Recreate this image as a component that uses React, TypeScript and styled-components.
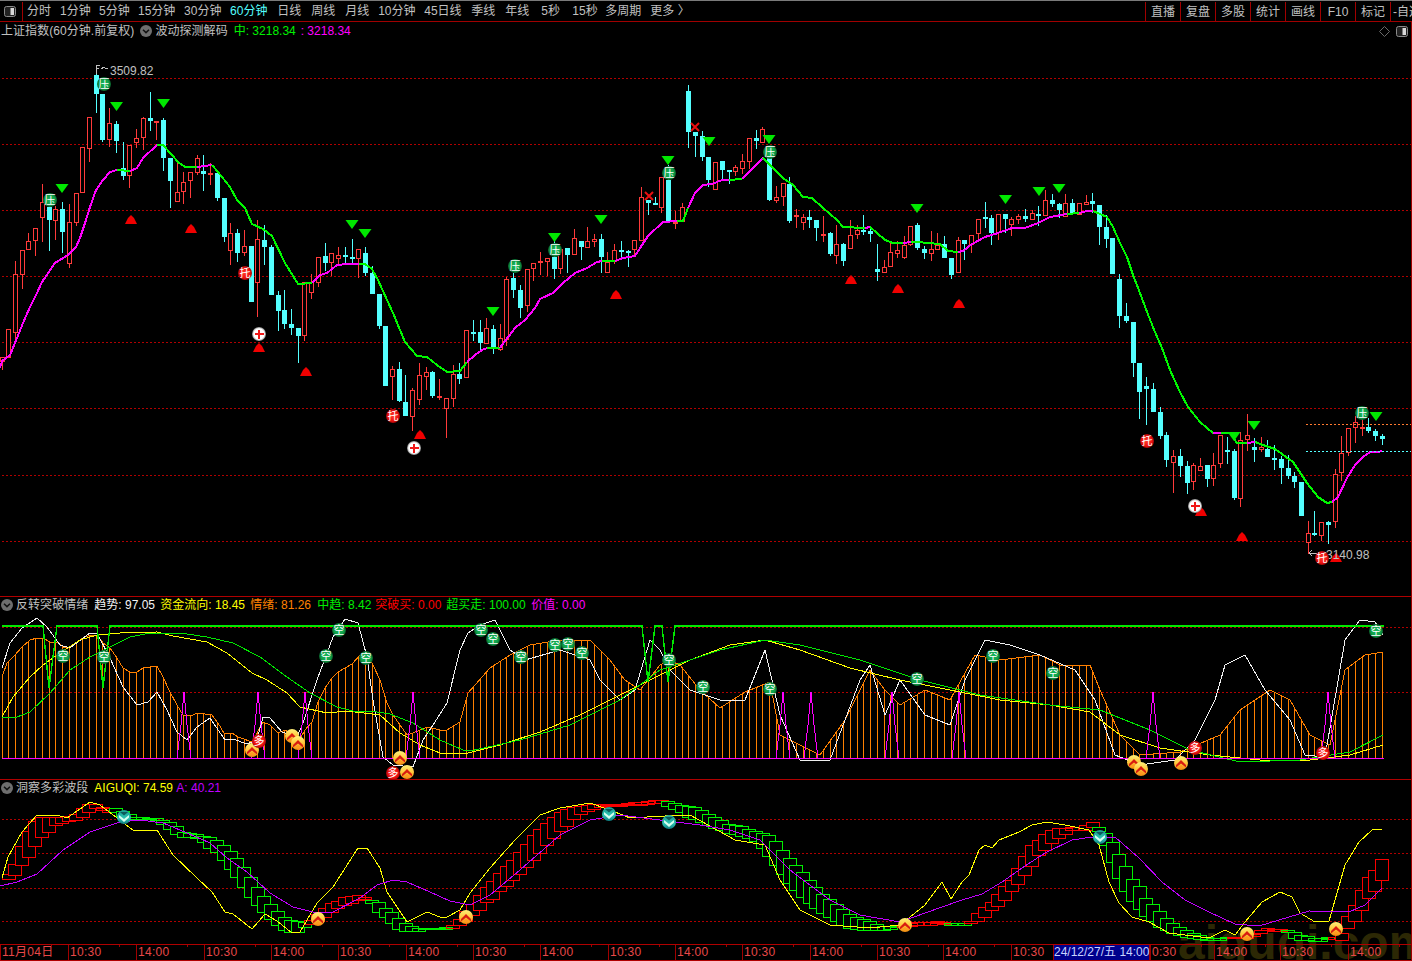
import React from 'react';
import styled, { createGlobalStyle } from 'styled-components';

const GlobalStyle = createGlobalStyle`
  html, body { margin: 0; padding: 0; background: #000; }
  #root { width: 1412px; height: 961px; overflow: hidden; }
`;

const FONT = `"Liberation Sans", "Noto Sans CJK SC", sans-serif`;

const Screen = styled.div`
  position: relative;
  width: 1412px;
  height: 961px;
  background: #000;
  display: flex;
  flex-direction: column;
  overflow: hidden;
  font: 12px/16px ${FONT};
  color: #c0c0c0;
`;
const TopBar = styled.div`
  position: relative;
  z-index: 1;
  height: 20px;
  flex: none;
  display: flex;
  align-items: stretch;
  border-top: 1px solid #7a7a7a;
  border-bottom: 1px solid #a00000;
  box-sizing: content-box;
`;
const MenuButton = styled.div`
  width: 23px;
  flex: none;
  display: flex;
  align-items: center;
  justify-content: center;
  border-right: 1px solid #a00000;
  box-sizing: border-box;
  margin-top: 1px;
  padding-right: 3px;
`;
const Tabs = styled.div`
  display: flex;
  align-items: center;
  padding-left: 4px;
  flex: 1;
`;
const Tab = styled.span<{ $active?: boolean; $gap: number }>`
  white-space: nowrap;
  margin-right: ${p => p.$gap}px;
  color: ${p => (p.$active ? '#54ffff' : '#c0c0c0')};
`;
const ToolCell = styled.div<{ $w?: number }>`
  width: ${p => p.$w ?? 35}px;
  flex: none;
  box-sizing: border-box;
  border-left: 1px solid #a00000;
  display: flex;
  align-items: center;
  justify-content: center;
  white-space: nowrap;
  overflow: hidden;
  margin-top: 1px;
`;
const LastCell = styled(ToolCell)`
  justify-content: flex-start;
  padding-left: 2px;
`;

const Pane = styled.section<{ $h: number }>`
  position: relative;
  z-index: 1;
  height: ${p => p.$h}px;
  flex: none;
  display: flex;
  flex-direction: column;
  box-sizing: border-box;
  border-right: 1px solid #a00000;
  border-bottom: 1px solid #b00000;
`;
const PaneHeader = styled.div<{ $h: number }>`
  height: ${p => p.$h}px;
  flex: none;
  display: flex;
  align-items: center;
  padding-left: 1px;
  white-space: nowrap;
`;
const Title = styled.span<{ $mr?: number }>`
  color: #c0c0c0;
  margin-right: ${p => p.$mr ?? 0}px;
  letter-spacing: 0.05px;
`;
const Value = styled.span<{ $c: string; $x: number }>`
  color: ${p => p.$c};
  position: absolute;
  left: ${p => p.$x}px;
`;
const HeaderValues = styled.div`
  position: relative;
  flex: 1;
  height: 16px;
`;
const Caret = styled.svg`
  width: 12px;
  height: 12px;
  flex: none;
  margin: 0 3px 0 0;
`;
const CornerIcons = styled.div`
  display: flex;
  align-items: center;
  gap: 6px;
  padding-right: 3px;
`;
const ChartSvg = styled.svg`
  display: block;
  flex: 1;
  width: 1411px;
  min-height: 0;
`;
const Axis = styled.footer`
  position: relative;
  z-index: 1;
  height: 16px;
  flex: none;
  display: flex;
  border-bottom: 1px solid #b00000;
  border-right: 1px solid #a00000;
  box-sizing: border-box;
  color: #e84848;
`;
const AxisCell = styled.div<{ $w: number }>`
  position: relative;
  width: ${p => p.$w}px;
  flex: none;
  box-sizing: border-box;
  border-left: 1px solid #a00000;
  padding-left: 1px;
  line-height: 15px;
  letter-spacing: 0.3px;
  white-space: nowrap;
  overflow: hidden;
  &::after {
    content: '';
    position: absolute;
    left: 50px;
    top: 0;
    width: 1px;
    height: 2px;
    background: #a00000;
  }
`;
const AxisCursor = styled.div<{ $w: number }>`
  width: ${p => p.$w}px;
  flex: none;
  box-sizing: border-box;
  background: #00008c;
  color: #c8d4ff;
  line-height: 15px;
  text-align: center;
  white-space: nowrap;
  border-left: 1px solid #a00000;
  border-right: 1px solid #a00000;
`;
const Watermark = styled.div`
  position: absolute;
  left: 1178px;
  top: 913px;
  font: bold 48px/60px "Liberation Sans", sans-serif;
  color: #2c2805;
  white-space: nowrap;
  z-index: 0;
`;
const PriceTag = styled.text`
  font: 12px ${FONT};
  fill: #c0c0c0;
`;
const BadgeText = styled.text`
  font: 11px "Noto Sans CJK SC", sans-serif;
  fill: #fff;
  text-anchor: middle;
`;
const Grid = styled.line`
  stroke: #b00000;
  stroke-width: 1;
  stroke-dasharray: 2 2;
  shape-rendering: crispEdges;
`;
const Line = styled.polyline<{ $c: string; $w?: number }>`
  fill: none;
  stroke: ${p => p.$c};
  stroke-width: ${p => p.$w ?? 1};
  shape-rendering: crispEdges;
`;
const Tri = styled.polygon<{ $c: string }>`
  fill: ${p => p.$c};
`;

type C = [number, number, number, number, number];
const CANDLES: C[] = [
[357,362,357,370,1],[329,358,329,358,1],[274,333,261,340,1],[250,275,250,289,1],[241,250,233,250,1],[228,241,228,256,1],[202,218,184,242,1],[207,220,207,251,0],[209,221,206,240,1],[209,232,202,253,0],
[222,264,204,268,1],[193,223,193,226,1],[147,193,147,193,1],[117,149,117,162,1],[75,94,65,113,0],[94,140,94,142,0],[123,140,108,147,1],[124,141,121,153,0],[168,176,142,180,0],[145,176,145,188,1],
[138,143,129,148,1],[118,138,117,150,1],[118,121,92,131,0],[121,123,121,140,1],[120,158,118,171,0],[158,181,158,208,0],[192,202,160,202,1],[182,192,172,204,1],[172,181,172,198,1],[158,173,155,175,1],
[171,174,155,191,0],[173,175,163,185,1],[173,198,173,201,0],[198,237,198,242,0],[233,251,223,265,1],[233,253,229,262,0],[246,253,230,256,1],[246,302,246,302,0],[239,283,220,317,1],[240,247,225,265,0],
[247,295,245,295,0],[295,311,291,331,0],[310,324,290,329,0],[324,328,309,335,0],[328,336,328,363,0],[282,336,282,341,1],[282,293,274,299,1],[257,283,257,287,1],[256,263,243,271,0],[253,263,253,276,1],
[255,259,247,264,1],[255,257,247,265,0],[257,258,239,263,0],[249,259,249,278,1],[253,273,247,276,0],[273,294,266,294,0],[294,326,294,329,0],[326,386,326,386,0],[369,377,366,400,1],[369,401,362,402,0],
[402,416,375,416,0],[390,417,388,431,1],[375,400,363,405,1],[372,377,367,390,1],[372,396,371,398,0],[396,397,379,400,1],[398,409,398,438,1],[374,399,365,407,1],[374,379,363,384,0],[330,378,330,378,1],
[332,333,320,341,0],[332,343,320,350,0],[328,344,318,344,1],[329,348,325,354,0],[338,350,324,351,1],[279,340,277,346,1],[278,290,273,298,0],[290,308,285,318,0],[269,306,269,312,1],[263,269,263,281,1],
[261,263,252,275,1],[258,262,258,276,1],[257,269,240,279,0],[249,269,249,274,1],[248,255,248,273,0],[238,255,229,255,1],[241,247,241,260,0],[241,248,227,248,1],[239,242,234,247,1],[239,257,234,273,0],
[262,273,252,273,1],[250,262,244,264,1],[250,251,241,257,0],[251,252,250,267,0],[240,250,240,257,1],[197,241,187,241,1],[200,203,200,215,0],[203,205,197,205,0],[177,208,177,213,1],[180,222,165,222,0],
[222,223,211,229,1],[207,222,203,222,1],[91,132,85,148,0],[132,136,132,157,0],[136,157,131,161,0],[157,180,157,187,0],[162,190,162,190,1],[161,170,161,180,0],[170,171,170,184,0],[167,172,165,176,1],
[161,169,154,174,1],[138,162,138,169,1],[138,141,130,149,0],[129,143,127,143,1],[153,200,153,201,0],[197,201,186,203,1],[183,197,183,206,1],[184,221,177,223,0],[215,216,209,228,1],[217,223,214,230,1],
[217,220,210,228,0],[220,228,220,241,0],[234,235,216,242,1],[233,254,232,256,0],[244,256,225,264,1],[244,261,243,266,0],[235,249,220,249,1],[230,235,225,239,1],[230,231,215,235,0],[231,234,227,242,0],
[269,272,244,281,0],[267,273,260,273,1],[252,267,243,267,1],[250,254,241,258,1],[245,258,236,259,1],[226,245,226,246,1],[225,248,223,250,0],[249,253,246,259,0],[249,254,231,261,1],[245,250,233,250,1],
[244,258,236,258,0],[258,275,258,279,0],[240,273,237,273,1],[240,244,240,260,0],[235,245,235,253,1],[219,234,219,242,1],[217,218,202,228,0],[218,233,215,245,0],[214,233,214,240,1],[214,219,214,233,0],
[219,225,217,236,1],[216,220,214,224,1],[216,219,209,222,0],[213,220,210,220,1],[214,215,206,226,0],[200,216,190,216,1],[200,204,194,207,0],[204,210,203,218,0],[203,217,194,217,1],[203,213,199,213,0],
[203,215,203,215,1],[202,205,195,205,1],[201,204,193,213,0],[205,227,205,245,0],[227,239,215,248,0],[238,274,238,274,0],[279,316,274,328,0],[316,321,303,323,0],[322,363,322,377,0],[363,392,363,419,0],
[386,389,377,425,0],[389,412,383,412,0],[412,436,407,439,0],[435,460,432,467,0],[456,463,450,493,1],[456,466,449,477,0],[466,483,461,494,0],[465,482,463,490,1],[466,471,458,471,1],[465,479,465,487,0],
[465,479,453,486,1],[435,464,435,468,1],[450,451,437,464,0],[451,498,449,500,0],[440,499,432,507,1],[435,440,414,451,1],[447,450,438,462,0],[447,450,437,452,1],[449,457,440,457,0],[458,459,445,470,0],
[459,468,456,484,0],[468,476,455,479,0],[476,482,472,488,0],[482,516,482,516,0],[533,543,521,554,1],[533,535,511,536,0],[522,536,522,541,1],[522,525,521,544,0],[474,522,469,528,1],[453,473,436,481,1],
[428,453,428,456,1],[422,428,416,443,1],[427,429,418,436,1],[427,431,418,433,0],[431,436,429,441,0],[436,439,434,445,0],
];

const xAt = (i: number) => Math.floor(2 + 6.733 * i) + 0.5;

const MA: [string, string][] = [
['p','0,368 2,361 10,355 17,338 23,323 30,307 37,293 42,282 55,263 68,255 76,247 80,238 86,220 90,207 96,190 103,180 110,172 117,170'],
['g','117,170 130,171'],
['p','130,171 137,168 143,158 157,145'],
['g','157,145 163,145 172,155 178,162 185,167 197,167'],
['p','197,167 212,165'],
['g','212,165 218,172 230,187 237,200 245,208 252,224 263,229 272,236 285,263 298,284 312,283'],
['p','312,283 320,275 327,273 337,265 347,264 359,264'],
['g','359,264 365,264 372,269 378,280 393,313 405,342 417,356 427,357 437,365 447,372 460,371 467,362'],
['p','467,362 475,355 482,350 487,348'],
['g','487,348 500,348'],
['p','500,348 502,345 515,328 525,320 535,308 540,299 553,293 563,283 575,273 587,268 597,262 602,261'],
['g','602,261 615,261'],
['p','615,261 623,258 635,256 642,245 648,236 663,222 677,221'],
['g','677,221 683,221 688,208'],
['p','688,208 695,193 703,185 712,184 722,180 729,180'],
['g','729,180 742,179'],
['p','742,179 752,169 763,158'],
['g','763,158 773,168 783,178 793,185 803,197 812,198 823,208 837,220 843,227 865,228'],
['p','865,228 870,227'],
['g','870,227 877,233 885,240 893,243 903,243'],
['p','903,243 911,242'],
['g','911,242 918,242 927,243 940,244 948,251 958,252'],
['p','958,252 963,251 972,244 985,237 995,234 1012,228 1025,228 1038,223 1050,217 1067,214'],
['g','1067,214 1079,213'],
['p','1079,213 1087,211 1093,211'],
['g','1093,211 1107,217 1113,227 1120,243 1127,257 1133,275 1140,293 1147,312 1155,332 1162,348 1170,370 1180,392 1188,407 1200,422 1213,433'],
['p','1213,433 1221,433'],
['g','1221,433 1230,433 1237,443 1247,443'],
['p','1247,443 1255,442'],
['g','1255,442 1263,445 1275,449 1293,462 1307,483 1318,497 1327,503 1332,502'],
['p','1332,502 1338,497 1347,478 1355,465 1363,457 1370,452 1378,452 1382,451'],
];

const parse = (s: string) => s.trim().split(/\s+/).map(p => p.split(',').map(Number));
const interp = (pts: number[][], x: number) => {
  if (x <= pts[0][0]) return pts[0].slice(1);
  for (let k = 1; k < pts.length; k++) {
    if (x <= pts[k][0]) {
      const [x0, ...a] = pts[k - 1];
      const [x1, ...b] = pts[k];
      const t = (x - x0) / (x1 - x0);
      return a.map((v, j) => v + (b[j] - v) * t);
    }
  }
  return pts[pts.length - 1].slice(1);
};

const ORANGE = '2,677 7,663 15,655 22,647 30,640 37,638 43,638 50,642 57,642 63,647 70,647 77,642 83,638 90,635 97,635 103,643 110,648 117,658 123,668 130,672 137,672 143,668 157,666 163,677 170,692 177,705 183,715 190,716 198,713 212,715 218,723 224,733 232,733 238,737 252,742 257,733 263,722 270,725 278,733 285,730 292,735 298,742 305,730 312,722 318,702 325,688 332,678 338,672 352,664 360,655 367,655 373,665 380,680 387,703 393,715 400,725 407,735 413,733 427,727 440,730 447,730 460,722 468,693 475,685 490,668 510,655 530,645 560,640 590,640 600,650 610,660 625,680 640,690 660,665 670,660 680,665 700,690 720,708 745,692 770,682 780,735 800,745 820,755 845,720 870,670 885,690 900,705 925,690 950,700 975,655 1000,660 1040,655 1060,665 1090,665 1100,690 1120,735 1140,755 1180,752 1220,735 1240,710 1270,690 1290,700 1310,735 1330,745 1345,670 1365,655 1383,652';
const WHITE = '2,668 10,643 22,628 37,618 47,627 60,645 70,648 90,633 97,633 110,658 123,687 137,705 148,702 157,692 167,710 177,732 187,740 197,727 210,718 225,740 233,739 247,744 257,740 263,717 270,718 282,732 297,737 303,723 317,680 333,637 345,619 358,623 367,657 373,700 383,757 393,765 413,767 423,740 433,725 447,703 460,650 468,633 480,625 495,620 510,650 525,660 560,650 590,660 600,680 620,700 635,690 650,640 660,650 670,670 690,690 720,700 745,700 765,650 780,715 800,760 830,760 860,680 870,665 885,715 900,680 925,715 950,725 965,680 985,640 1010,645 1040,655 1075,670 1095,700 1115,755 1140,765 1175,760 1195,740 1215,700 1225,665 1245,655 1265,690 1290,720 1305,755 1325,757 1345,640 1360,620 1375,622 1383,635';
const YELLOW2 = '2,717 13,697 30,677 43,665 60,653 80,640 97,635 120,633 157,632 173,636 207,642 227,653 252,673 267,680 287,693 300,707 327,713 347,711 380,715 400,733 420,745 440,753 468,753 500,745 540,732 580,715 620,695 650,680 690,660 730,645 765,640 800,650 850,668 900,680 950,690 1000,700 1050,705 1090,712 1120,735 1160,748 1210,755 1260,760 1310,760 1350,755 1383,745';
const GREEN2 = '2,717 17,717 30,712 50,693 70,670 90,657 110,647 130,637 150,633 180,633 207,637 233,643 260,657 287,677 310,693 337,707 353,711 377,712 390,714 413,723 440,740 463,750 470,751 520,740 570,725 620,700 660,670 720,650 765,640 800,645 860,660 920,680 980,695 1050,705 1100,710 1150,730 1190,750 1240,762 1300,760 1350,752 1383,735';
const OVERBOUGHT = '2,626 43,626 49,688 57,626 97,626 103,688 110,626 642,626 648,682 655,626 662,626 668,682 675,626 1384,626';
const SPIKES = [184, 258, 305, 413, 783, 811, 892, 959, 1153, 1328];

const YELLOW3 = '2,878 8,857 22,832 37,815 57,815 67,818 90,802 100,805 117,818 133,830 157,830 173,855 197,878 212,892 225,912 233,914 252,929 265,914 277,921 292,933 300,932 317,903 333,887 358,848 367,848 380,868 387,892 407,922 427,912 440,917 447,917 460,910 470,893 490,868 515,840 540,815 560,808 590,803 610,810 630,818 665,816 690,815 710,826 735,840 765,845 780,880 800,910 830,925 870,928 900,925 925,905 942,882 951,899 962,882 969,875 979,850 985,845 992,848 999,840 1019,832 1032,825 1047,822 1065,825 1089,830 1099,845 1109,882 1119,903 1132,917 1149,922 1169,933 1209,938 1225,930 1235,935 1245,922 1262,902 1280,892 1292,897 1300,913 1315,922 1329,921 1345,865 1359,842 1372,830 1382,829';
const PURPLE3 = '0,886 17,882 37,874 63,850 90,832 120,822 140,820 163,823 187,833 210,843 227,858 247,872 270,893 293,907 313,912 333,912 360,898 377,885 393,880 407,882 430,892 450,901 470,905 490,895 520,870 560,835 590,820 620,815 660,820 700,825 730,830 760,840 790,870 830,900 860,915 900,922 942,907 962,900 982,894 1002,882 1022,868 1045,853 1072,840 1092,837 1115,837 1139,858 1162,882 1185,900 1209,912 1235,924 1259,926 1289,917 1309,911 1349,912 1365,905 1382,888';

const BOXES = '0,880,883 2,875,880 9,863,874 16,845,865 23,830,856 29,820,845 36,817,837 42,817,832 49,817,825 56,817,823 63,816,821 70,814,820 76,808,817 83,804,812 90,804,808 97,807,810 108,808,812 115,810,815 123,814,819 130,817,819 137,817,819 144,818,819 151,818,820 158,820,825 165,823,830 172,827,835 178,832,837 186,833,837 192,834,838 199,836,842 206,837,850 213,841,853 220,847,863 227,853,872 234,862,880 241,872,893 248,881,900 256,894,910 262,901,917 269,908,922 276,915,928 283,920,932 290,920,932 297,923,928 304,920,924 310,915,921 318,908,917 326,903,912 333,900,907 339,897,905 346,896,903 353,895,900 360,898,899 367,900,904 374,902,913 381,909,918 388,914,926 395,920,931 402,925,931 409,927,931 416,928,929 423,928,929 430,928,929 437,928,930 445,926,928 452,921,926 459,911,921 466,905,916 473,895,910 480,888,903 487,880,898 494,872,890 501,865,885 508,858,878 515,850,872 522,842,865 529,833,858 536,827,850 543,820,842 550,815,835 557,810,828 564,807,822 571,806,815 578,805,812 590,804,808 600,805,806 620,803,805 640,801,804 655,800,803 665,802,808 675,805,812 685,806,818 695,810,822 705,815,826 715,820,830 725,825,834 735,826,836 745,830,838 755,832,845 765,836,860 775,848,872 785,860,885 795,870,895 805,882,905 815,893,912 825,900,918 835,908,925 845,915,928 855,918,930 865,922,930 875,926,930 885,926,929 895,925,927 905,923,926 915,922,925 935,921,923 945,923,925 958,923,925 965,921,923 972,912,920 979,907,917 985,903,911 992,893,905 999,885,899 1005,881,892 1012,867,883 1019,855,874 1025,845,866 1032,840,855 1039,833,849 1045,830,843 1052,828,838 1059,828,834 1066,827,830 1072,827,830 1079,825,830 1086,822,827 1092,827,830 1099,832,843 1106,841,861 1112,853,877 1119,865,890 1126,878,900 1134,887,910 1139,897,915 1146,904,921 1154,911,927 1160,918,930 1166,923,933 1173,927,935 1180,930,937 1187,933,938 1194,935,939 1201,937,940 1208,938,940 1222,937,938 1242,937,938 1255,930,933 1262,928,930 1282,930,932 1289,932,938 1295,935,940 1309,938,941 1329,937,939 1335,934,941 1341,917,929 1349,904,920 1355,891,911 1362,878,899 1369,869,890 1375,859,880';
const GREEN_RANGES = [[-1, 2], [105, 144], [150, 303], [362, 442], [660, 892], [943, 960], [1090, 1222], [1280, 1328]];

const DOWN = [[62,184],[116.5,102],[163.5,99],[352,220],[365,229],[493,307],[554.5,233],[601,215],[668,156],[709,137],[769,135],[917,204],[1005.5,195],[1039,187],[1059,184],[1234,432],[1254,421],[1376,412]];
const UP = [[131,215],[191,224],[259,343],[306,367],[420,430],[616,290],[851,275],[898,284],[959,299],[1201,507],[1242,532],[1336,553]];
const YA = [[50,200],[104,84],[555,250],[515,266],[669,173],[770,152],[1362,413]];
const TUO = [[245,273],[393,416],[1147,441],[1322,558]];
const PLUS = [[259,334],[414,448],[1195,506]];
const CROSS = [[649,196],[695,127]];

const KONG = [[63,656],[104,657],[339,630],[326,656],[366,658],[481,630],[493,639],[521,657],[555,645],[568,644],[582,653],[669,660],[703,687],[770,689],[917,679],[993,656],[1053,673],[1376,631]];
const UP2 = [[252,750],[292,736],[298,743],[400,758],[407,772],[1134,762],[1141,769],[1181,763]];
const DUO = [[259,741],[393,773],[1195,748],[1323,753]];
const TEAL3 = [[124,817],[609,814],[669,822],[1100,837]];
const UP3 = [[318,919],[466,917],[905,925],[1247,934],[1336,929]];

const Gradients = () => (
  <defs>
    <radialGradient id="bGreen"><stop offset="0%" stopColor="#16b95a" /><stop offset="70%" stopColor="#0fa048" /><stop offset="100%" stopColor="#0a5f2a" /></radialGradient>
    <radialGradient id="bRed"><stop offset="0%" stopColor="#ff3a2a" /><stop offset="70%" stopColor="#f01010" /><stop offset="100%" stopColor="#a00808" /></radialGradient>
    <radialGradient id="bWhite"><stop offset="0%" stopColor="#ffffff" /><stop offset="75%" stopColor="#ffffff" /><stop offset="100%" stopColor="#808080" /></radialGradient>
    <linearGradient id="bGold" x1="0" y1="0" x2="0" y2="1"><stop offset="0%" stopColor="#fff07a" /><stop offset="50%" stopColor="#ffc83c" /><stop offset="100%" stopColor="#f08a10" /></linearGradient>
    <linearGradient id="bTeal" x1="0" y1="0" x2="0" y2="1"><stop offset="0%" stopColor="#1a9a90" /><stop offset="60%" stopColor="#2cc4b4" /><stop offset="100%" stopColor="#0e7d82" /></linearGradient>
  </defs>
);

const Disc = ({ x, y, fill, ch }: { x: number; y: number; fill: string; ch: string }) => (
  <g>
    <circle cx={x} cy={y} r={7} fill={`url(#${fill})`} />
    <BadgeText x={x} y={y + 4}>{ch}</BadgeText>
  </g>
);
const PlusBadge = ({ x, y }: { x: number; y: number }) => (
  <g>
    <circle cx={x} cy={y} r={7} fill="url(#bWhite)" />
    <path d={`M${x - 4.5} ${y}h9M${x} ${y - 4.5}v9`} stroke="#f01818" strokeWidth={2} shapeRendering="crispEdges" />
  </g>
);
const CrossMark = ({ x, y }: { x: number; y: number }) => (
  <path d={`M${x - 4} ${y - 4}l8 8M${x + 4} ${y - 4}l-8 8`} stroke="#e81010" strokeWidth={2} fill="none" />
);
const UpChevron = ({ x, y }: { x: number; y: number }) => (
  <g>
    <circle cx={x} cy={y} r={7} fill="url(#bGold)" />
    <path d={`M${x - 5} ${y + 2}l5-5 5 5v2.5l-5-4-5 4z`} fill="#d81c10" />
    <path d={`M${x - 4} ${y + 5}l4-3 4 3z`} fill="#ff9a20" />
  </g>
);
const DownChevron = ({ x, y }: { x: number; y: number }) => (
  <g>
    <circle cx={x} cy={y} r={7} fill="url(#bTeal)" />
    <path d={`M${x - 5} ${y - 2}l5 4 5-4v2.5l-5 4.5-5-4.5z`} fill="#d6fff0" />
    <path d={`M${x - 4} ${y - 5}h8l-4 3.5z`} fill="#0c5a5a" />
  </g>
);
const CaretIcon = () => (
  <Caret viewBox="0 0 12 12">
    <circle cx="6" cy="6" r="6" fill="#6e6e6e" />
    <path d="M3 4.8 6 7.6 9 4.8" stroke="#111" strokeWidth="1.5" fill="none" />
  </Caret>
);
const PanelIcon = ({ size = 12 }: { size?: number }) => (
  <svg width={size} height={size - 1} viewBox="0 0 12 11">
    <rect x="0.5" y="0.5" width="11" height="10" rx="2" fill="#222" stroke="#8a8a8a" />
    <rect x="6.5" y="2" width="3.5" height="7" fill="#d8d8d8" />
  </svg>
);

const Candles = () => (
  <g>
    {CANDLES.map((c, i) => {
      const x = xAt(i);
      const [t, b, wt, wb, red] = c;
      const col = red ? '#ff3a3a' : '#54ffff';
      return (
        <g key={i} shapeRendering="crispEdges">
          <line x1={x} x2={x} y1={wt} y2={wb} stroke={col} />
          {red ? (
            <rect x={x - 2} y={t + 0.5} width={4} height={Math.max(b - t - 1, 1)} fill="#000" stroke={col} />
          ) : (
            <rect x={x - 2.5} y={t} width={5} height={Math.max(b - t, 2)} fill={col} />
          )}
        </g>
      );
    })}
  </g>
);

const MainChart = () => (
  <ChartSvg viewBox="0 40 1411 556">
    <Gradients />
    {[78, 144, 210, 276, 342, 408, 475, 541].map(y => (
      <Grid key={y} x1={2} x2={1411} y1={y + 0.5} y2={y + 0.5} />
    ))}
    <Candles />
    {MA.map(([k, pts], i) => (
      <Line key={i} points={pts} $c={k === 'g' ? '#00f800' : '#ff00ff'} $w={2} />
    ))}
    <line x1={1306} x2={1411} y1={424.5} y2={424.5} stroke="#ff7a30" strokeDasharray="2 2" shapeRendering="crispEdges" />
    <line x1={1306} x2={1411} y1={451.5} y2={451.5} stroke="#54ffff" strokeDasharray="2 2" shapeRendering="crispEdges" />
    {DOWN.map(([x, y], i) => (
      <Tri key={i} $c="#00e800" points={`${x - 6.5},${y} ${x + 6.5},${y} ${x},${y + 9}`} />
    ))}
    {UP.map(([x, y], i) => (
      <Tri key={i} $c="#f00000" points={`${x - 6},${y + 9} ${x + 6},${y + 9} ${x + 3},${y + 3} ${x},${y} ${x - 3},${y + 3}`} />
    ))}
    <path d="M96.5 74V65h3M96.5 68h2.5M101 68.5l3-1 4 1.5" stroke="#c0c0c0" fill="none" shapeRendering="crispEdges" />
    <PriceTag x={110} y={75}>3509.82</PriceTag>
    <path d="M1309 553h17M1312 550l-3 3 3 3" stroke="#c0c0c0" fill="none" shapeRendering="crispEdges" />
    <PriceTag x={1326} y={559}>3140.98</PriceTag>
    {YA.map(([x, y], i) => <Disc key={i} x={x} y={y} fill="bGreen" ch="压" />)}
    {TUO.map(([x, y], i) => <Disc key={i} x={x} y={y} fill="bRed" ch="托" />)}
    {PLUS.map(([x, y], i) => <PlusBadge key={i} x={x} y={y} />)}
    {CROSS.map(([x, y], i) => <CrossMark key={i} x={x} y={y} />)}
  </ChartSvg>
);

const SentimentChart = () => {
  const o = parse(ORANGE);
  return (
    <ChartSvg viewBox="0 613 1411 166">
      <Grid x1={2} x2={1411} y1={692.5} y2={692.5} />
      <Grid x1={2} x2={1411} y1={627.5} y2={627.5} />
      {CANDLES.map((_, i) => {
        const x = xAt(i);
        const top = interp(o, x)[0];
        return top < 757 ? (
          <line key={i} x1={x} x2={x} y1={top} y2={758} stroke="#ff8000" shapeRendering="crispEdges" />
        ) : null;
      })}
      <Line points={ORANGE} $c="#ff8000" />
      <Line points={WHITE} $c="#f0f0f0" />
      <Line points={YELLOW2} $c="#ffff00" />
      <Line points={GREEN2} $c="#00e800" />
      <Line points={OVERBOUGHT} $c="#00e800" $w={1.4} />
      {SPIKES.map(x => (
        <Line key={x} $c="#ff00ff" points={`${x - 7},758 ${x - 3},725 ${x},692 ${x + 3},725 ${x + 7},758`} />
      ))}
      <line x1={2} x2={1384} y1={758.5} y2={758.5} stroke="#ff00ff" shapeRendering="crispEdges" />
      {KONG.map(([x, y], i) => <Disc key={i} x={x} y={y} fill="bGreen" ch="空" />)}
      {UP2.map(([x, y], i) => <UpChevron key={i} x={x} y={y} />)}
      {DUO.map(([x, y], i) => <Disc key={i} x={x} y={y} fill="bRed" ch="多" />)}
    </ChartSvg>
  );
};

const WaveChart = () => {
  const b = parse(BOXES);
  return (
    <ChartSvg viewBox="0 796 1411 148">
      {[819, 853, 888, 921].map(y => <Grid key={y} x1={2} x2={1411} y1={y + 0.5} y2={y + 0.5} />)}
      {CANDLES.slice(0, 205).map((_, i) => {
        const x = xAt(i);
        const [t, bot] = interp(b, x);
        const green = GREEN_RANGES.some(([a, z]) => x >= a && x < z);
        return (
          <rect
            key={i}
            x={x}
            y={Math.round(t) + 0.5}
            width={13}
            height={Math.max(Math.round(bot - t), 1)}
            fill={bot - t > 4 ? '#000' : 'none'}
            stroke={green ? '#00f000' : '#f80000'}
            shapeRendering="crispEdges"
          />
        );
      })}
      <Line points={YELLOW3} $c="#ffff00" />
      <Line points={PURPLE3} $c="#c000ff" />
      {TEAL3.map(([x, y], i) => <DownChevron key={i} x={x} y={y} />)}
      {UP3.map(([x, y], i) => <UpChevron key={i} x={x} y={y} />)}
    </ChartSvg>
  );
};

const TABS: [string, number][] = [['分时',9],['1分钟',8.3],['5分钟',8.3],['15分钟',8.7],['30分钟',8.7],['60分钟',9.7],['日线',10],['周线',10],['月线',9],['10分钟',8.7],['45日线',9.7],['季线',10],['年线',12],['5秒',12.3],['15秒',7.7],['多周期',9],['更多 〉',0]];
const TOOLS = ['直播','复盘','多股','统计','画线','F10','标记'];
const AXIS: [number, string][] = [[68,'11月04日'],[68,'10:30'],[68,'14:00'],[67,'10:30'],[67,'14:00'],[68,'10:30'],[67,'14:00'],[67,'10:30'],[68,'14:00'],[67,'10:30'],[67,'14:00'],[68,'10:30'],[67,'14:00'],[66,'10:30'],[68,'14:00']];

export default function App() {
  return (
    <Screen>
      <GlobalStyle />
      <Watermark>aiguqi.com</Watermark>
      <TopBar>
        <MenuButton><PanelIcon /></MenuButton>
        <Tabs>
          {TABS.map(([t, g]) => <Tab key={t} $gap={g} $active={t === '60分钟'}>{t}</Tab>)}
        </Tabs>
        {TOOLS.map(t => <ToolCell key={t}>{t}</ToolCell>)}
        <LastCell $w={22}>-自选</LastCell>
      </TopBar>
      <Pane $h={575}>
        <PaneHeader $h={18}>
          <Title $mr={6}>上证指数(60分钟.前复权)</Title>
          <CaretIcon />
          <Title>波动探测解码</Title>
          <HeaderValues>
            <Value $c="#00f000" $x={6}>中: 3218.34</Value>
            <Value $c="#ff00ff" $x={73}>: 3218.34</Value>
          </HeaderValues>
          <CornerIcons>
            <svg width="11" height="11" viewBox="0 0 11 11">
              <path d="M5.5.5 10.5 5.5 5.5 10.5.5 5.5z" fill="none" stroke="#6a6a6a" />
            </svg>
            <PanelIcon />
          </CornerIcons>
        </PaneHeader>
        <MainChart />
      </Pane>
      <Pane $h={183}>
        <PaneHeader $h={16}>
          <CaretIcon />
          <Title>反转突破情绪</Title>
          <HeaderValues>
            <Value $c="#f4f4f4" $x={6}>趋势: 97.05</Value>
            <Value $c="#ffff00" $x={72}>资金流向: 18.45</Value>
            <Value $c="#ff8000" $x={162}>情绪: 81.26</Value>
            <Value $c="#00f000" $x={229}>中趋: 8.42</Value>
            <Value $c="#ff0000" $x={287}>突破买: 0.00</Value>
            <Value $c="#00f000" $x={358}>超买走: 100.00</Value>
            <Value $c="#ff00ff" $x={443}>价值: 0.00</Value>
          </HeaderValues>
        </PaneHeader>
        <SentimentChart />
      </Pane>
      <Pane $h={165}>
        <PaneHeader $h={16}>
          <CaretIcon />
          <Title>洞察多彩波段</Title>
          <HeaderValues>
            <Value $c="#ffff00" $x={6}>AIGUQI: 74.59</Value>
            <Value $c="#c000ff" $x={88}>A: 40.21</Value>
          </HeaderValues>
        </PaneHeader>
        <WaveChart />
      </Pane>
      <Axis>
        {AXIS.map(([w, t], i) => <AxisCell key={i} $w={w}>{t}</AxisCell>)}
        <AxisCell $w={42}>10:30</AxisCell>
        <AxisCursor $w={97}>24/12/27/五 14:00</AxisCursor>
        <AxisCell $w={64}>0:30</AxisCell>
        <AxisCell $w={66}>14:00</AxisCell>
        <AxisCell $w={68}>10:30</AxisCell>
        <AxisCell $w={63}>14:00</AxisCell>
      </Axis>
    </Screen>
  );
}
